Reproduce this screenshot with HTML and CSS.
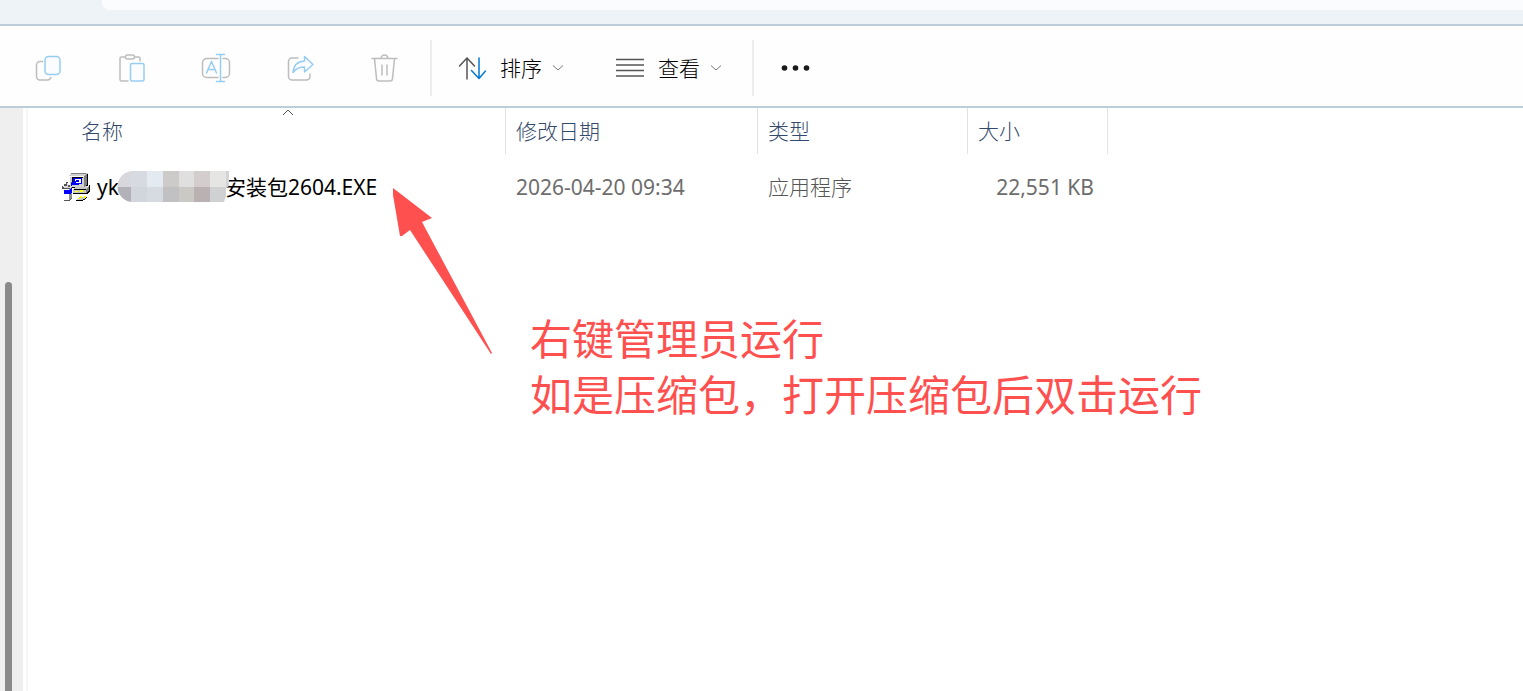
FILE: index.html
```html
<!DOCTYPE html>
<html lang="zh-CN">
<head>
  <meta charset="UTF-8">
  <meta name="viewport" content="width=device-width, initial-scale=1">
  <title>文件资源管理器</title>
  <link rel="stylesheet" href="styles.css">
</head>
<body>
  <header class="titlebar">
    <div class="address"></div>
  </header>

  <nav class="toolbar">
    <button class="tool" aria-label="复制" disabled>
      <svg width="28" height="28" viewBox="0 0 28 28">
        <path class="gray" d="M8.500 7.500H6a3.500 3.500 0 0 0-3.500 3.500v11.500A3.500 3.500 0 0 0 6 26h7.500a3.500 3.500 0 0 0 3.300-2.500"/>
        <rect class="blue" x="11" y="2.500" width="15" height="18" rx="3.500"/>
      </svg>
    </button>
    <button class="tool" aria-label="粘贴" disabled>
      <svg width="28" height="28" viewBox="0 0 28 28">
        <path class="gray" d="M10 27H3.500a1.500 1.500 0 0 1-1.500-1.500V4.500A1.500 1.500 0 0 1 3.500 3H7M17 3h3.500A1.500 1.500 0 0 1 22 4.500V7"/>
        <rect class="gray" x="7.500" y="1" width="9" height="4" rx="2"/>
        <rect class="blue" x="12.500" y="9.500" width="13.500" height="17.500" rx="1.500"/>
      </svg>
    </button>
    <button class="tool" aria-label="重命名" disabled>
      <svg width="30" height="30" viewBox="0 0 30 30">
        <path class="gray" d="M17 5.500H5.500A4 4 0 0 0 1.500 9.500v11a4 4 0 0 0 4 4H17M22 5.500h2.500a4 4 0 0 1 4 4v11a4 4 0 0 1-4 4H22"/>
        <path class="blue" d="M5.500 20l5-11.500 5 11.500M7 16.500h7M15.500 1.500h8M19.500 1.500v27M15.500 28.500h8"/>
      </svg>
    </button>
    <button class="tool" aria-label="共享" disabled>
      <svg width="28" height="28" viewBox="0 0 28 28">
        <path class="gray" d="M12 4H6a3.500 3.500 0 0 0-3.500 3.500v15A3.500 3.500 0 0 0 6 26h14.500a3.500 3.500 0 0 0 3.500-3.500V20"/>
        <path class="blue" d="M18.500 2.500v4.500C11 7.500 7.500 12 7 18.500c3-4 6.500-5.500 11.500-5.500v5L27 10.500z"/>
      </svg>
    </button>
    <button class="tool" aria-label="删除" disabled>
      <svg width="28" height="28" viewBox="0 0 28 28">
        <path class="gray" d="M2 4.500h25M11 4.500a3.500 3.500 0 0 1 7 0M4.500 4.500l2 20a2.500 2.500 0 0 0 2.500 2.500h11a2.500 2.500 0 0 0 2.500-2.500l2-20M12 11v10M17 11v10"/>
      </svg>
    </button>

    <span class="divider"></span>

    <button class="menu">
      <svg width="28" height="28" viewBox="0 0 28 28">
        <path class="dark" d="M9 25V4M1.500 12L9 4l7.500 8"/>
        <path class="accent" d="M21 4v20M13.500 16.500l7.500 8 6.500-7.500"/>
      </svg>
      <span>排序</span>
      <svg class="chevron" width="12" height="8" viewBox="0 0 12 8"><path d="M1 1.500l5 4.500 5-4.500"/></svg>
    </button>
    <button class="menu">
      <svg width="28" height="28" viewBox="0 0 28 28">
        <path class="dark" d="M0 5.500h28M0 11h28M0 16.500h28M0 22h28"/>
      </svg>
      <span>查看</span>
      <svg class="chevron" width="12" height="8" viewBox="0 0 12 8"><path d="M1 1.500l5 4.500 5-4.500"/></svg>
    </button>

    <span class="divider"></span>

    <button class="more" aria-label="更多">
      <svg width="30" height="8" viewBox="0 0 30 8">
        <circle cx="3.500" cy="4" r="2.800"/><circle cx="14.500" cy="4" r="2.800"/><circle cx="25.500" cy="4" r="2.800"/>
      </svg>
    </button>
  </nav>

  <div class="content">
    <aside class="sidebar">
      <div class="thumb"></div>
    </aside>

    <main class="files">
      <table>
        <thead>
          <tr>
            <th class="col-name">
              名称
              <svg class="sort-mark" width="12" height="7" viewBox="0 0 12 7"><path d="M1 6l5-5 5 5"/></svg>
            </th>
            <th class="col-date">修改日期</th>
            <th class="col-type">类型</th>
            <th class="col-size">大小</th>
          </tr>
        </thead>
        <tbody>
          <tr>
            <td>
              <div class="file">
                <svg class="file-icon" width="28" height="28" viewBox="0 0 28 28" shape-rendering="crispEdges">
                  <path fill="#d0d0d0" d="M7 2l2-2h16l1 1v11l-2 2H7z"/>
                  <path fill="#fff" d="M7 3h15v1H8v10H7z"/>
                  <path fill="#808080" d="M22 3l3-3v12l-3 2zM8 1l1-1h15v1z"/>
                  <path fill="#000" d="M25 1h1v12h-2v-1h1zM7 14h17v1H7zM10 4h11v1H11v7h-1z"/>
                  <path fill="#00f" d="M11 5h9v6h-3v1h-6z"/>
                  <path fill="#fff" d="M13 6h6v4h-5V9h3V8h-4z"/>
                  <path fill="#00f" d="M14 7h3v1h-3z"/>
                  <path fill="#c8c8c8" d="M11 16l2-2h12l2-1v5l-3 3H11z"/>
                  <path fill="#808080" d="M24 16l3-3v5l-3 3z"/>
                  <path fill="#000" d="M27 12h1v6l-3 3H11v-1h13l3-3zM12 16h12v1H12z"/>
                  <path fill="#ff0" d="M13 18h3v1h-3zM18 17h3v2h-3z"/>
                  <path fill="#555" d="M0 13h2v-2h2V9h2v3h3V9h2v3h-1v14l-3 2H2V16H0z"/>
                  <path fill="#d8d8d8" d="M1 13h4v-3h1v4h2v-2h2v3H2z"/>
                  <path fill="#fff" d="M2 16h5v11H2z"/>
                  <path fill="#909090" d="M7 16l3-2v11l-3 2z"/>
                  <path fill="#00f" d="M2 17h5l3-2v4l-2 2H2zM9 10l3-2v2l-3 3z"/>
                  <path fill="#c8c8c8" d="M17 24h7l-2 3h-8z"/>
                  <path fill="#ff0" d="M18 23h2v2h-2zM22 23h2v2h-2zM16 25h2v1h-2z"/>
                  <path fill="#000" d="M24 24h1v1h-1v1h-1v1h-2v1h-7v-1h7v-1h2v-1h1z"/>
                </svg>
                <span>yk</span>
                <svg class="mosaic" width="112" height="32" viewBox="0 0 112 32">
                  <clipPath id="blob"><path d="M16 0h96v15l-3 2v8l-2 6H16A15.500 15.500 0 0 1 16 0z"/></clipPath>
                  <g clip-path="url(#blob)" shape-rendering="crispEdges">
                    <path fill="#d8d8dc" d="M0 0h14v16H0z"/><path fill="#b2b1b7" d="M0 16h14v16H0z"/>
                    <path fill="#d8dae1" d="M14 0h16v16H14z"/><path fill="#d1d6dc" d="M14 16h16v16H14z"/>
                    <path fill="#e4eaf1" d="M30 0h16v16H30z"/><path fill="#d5dbe1" d="M30 16h16v16H30z"/>
                    <path fill="#cccbca" d="M46 0h16v16H46z"/><path fill="#c1c1c3" d="M46 16h16v16H46z"/>
                    <path fill="#dfdfdf" d="M62 0h15v16H62z"/><path fill="#cbc9c5" d="M62 16h15v16H62z"/>
                    <path fill="#d3cdcd" d="M77 0h16v16H77z"/><path fill="#bab2b2" d="M77 16h16v16H77z"/>
                    <path fill="#e5e5e4" d="M93 0h16v16H93z"/><path fill="#cfd1d2" d="M93 16h16v16H93z"/>
                    <path fill="#d2d4d6" d="M109 0h3v16h-3z"/>
                  </g>
                </svg>
                <span>安装包2604.EXE</span>
              </div>
            </td>
            <td>2026-04-20 09:34</td>
            <td class="type">应用程序</td>
            <td class="size">22,551 KB</td>
          </tr>
        </tbody>
      </table>

      <!-- hint drawn over the file list -->
      <div class="hint">
        <svg width="100" height="168" viewBox="0 0 100 168">
          <path d="M0 0L39 30L29 34L99 165L98 166L17 42L9 48L7 48L-1 1z"/>
        </svg>
        <p>右键管理员运行<br>如是压缩包，打开压缩包后双击运行</p>
      </div>
    </main>
  </div>
</body>
</html>
```

FILE: styles.css
```css
:root {
  --line: #bccdd9;
  --header-text: #344a6c;
  --muted: #6d6d6d;
  --red: #ff5050;
}

* {
  box-sizing: border-box;
}

body {
  margin: 0;
  min-height: 100vh;
  display: flex;
  flex-direction: column;
  background: #fff;
  color: #000;
  font-family: "Noto Sans", "Noto Sans CJK SC", sans-serif;
  font-size: 21px;
  line-height: 28px;
}

svg {
  display: block;
  flex: none;
  fill: none;
}

.titlebar {
  height: 26px;
  padding-left: 102px;
  background: #eef3f8;
  border-bottom: 2px solid var(--line);
}

.address {
  height: 10px;
  background: #fafcfe;
  border-bottom-left-radius: 8px;
}

/* toolbar */
.toolbar {
  display: flex;
  align-items: center;
  height: 82px;
  padding: 4px 6px 0;
  border-bottom: 2px solid var(--line);
  background: #fefefe;
}

button {
  padding: 0;
  border: none;
  background: none;
  color: #000;
  font: inherit;
  font-weight: 300;
}

.tool {
  display: flex;
  justify-content: center;
  align-items: center;
  width: 84px;
  height: 56px;
}

.gray,
.blue,
.dark,
.accent {
  stroke-width: 1.5;
  stroke-linecap: round;
  stroke-linejoin: round;
}

.gray {
  stroke: #bdbdbd;
}

.blue {
  stroke: #98cdf2;
  fill: #fafcff;
}

.dark {
  stroke: #555;
}

.accent {
  stroke: #0078d4;
}

.divider {
  width: 2px;
  height: 56px;
  margin-left: 4px;
  background: #ededed;
}

.menu {
  display: flex;
  align-items: center;
  height: 56px;
  padding: 0 26px;
}

.menu span {
  margin: 0 10px 0 14px;
}

.chevron {
  stroke: #777;
}

.more {
  padding: 0 27px;
}

.more svg {
  fill: #1a1a1a;
}

/* content */
.content {
  flex: 1;
  display: flex;
}

.sidebar {
  display: flex;
  width: 23px;
  padding: 174px 0 0 5px;
  background: #efefef;
}

.thumb {
  width: 7px;
  background: #8a8a8a;
  border-radius: 4px 4px 0 0;
}

.files {
  flex: 1;
  margin-left: 3px;
  border-left: 2px solid #f7f7f7;
}

table {
  table-layout: fixed;
  width: 1080px;
  border-collapse: separate;
  border-spacing: 0;
}

th {
  position: relative;
  height: 46px;
  padding: 0 10px;
  border-right: 1px solid #e2e2e2;
  color: var(--header-text);
  font-weight: 300;
  text-align: left;
}

.col-name {
  width: 478px;
  padding-left: 53px;
}

.col-date {
  width: 252px;
}

.col-type {
  width: 210px;
}

.sort-mark {
  position: absolute;
  top: 1px;
  left: 254px;
  stroke: #555;
}

td {
  height: 66px;
  padding: 0 10px;
  color: var(--muted);
}

td.type {
  color: #555;
  font-weight: 300;
}

td.size {
  padding-right: 14px;
  text-align: right;
}

td:first-child {
  padding-left: 34px;
}

.file {
  display: flex;
  align-items: center;
  color: #000;
}

.file-icon {
  margin-right: 7px;
}

.mosaic {
  z-index: 1;
  margin: 0 -4px 0 -2px;
}

.hint {
  display: flex;
  margin: -32px 0 0 365px;
  color: var(--red);
  font-size: 42px;
  line-height: 56px;
}

.hint svg {
  fill: var(--red);
}

.hint p {
  margin: 123px 0 0 37px;
}
```
